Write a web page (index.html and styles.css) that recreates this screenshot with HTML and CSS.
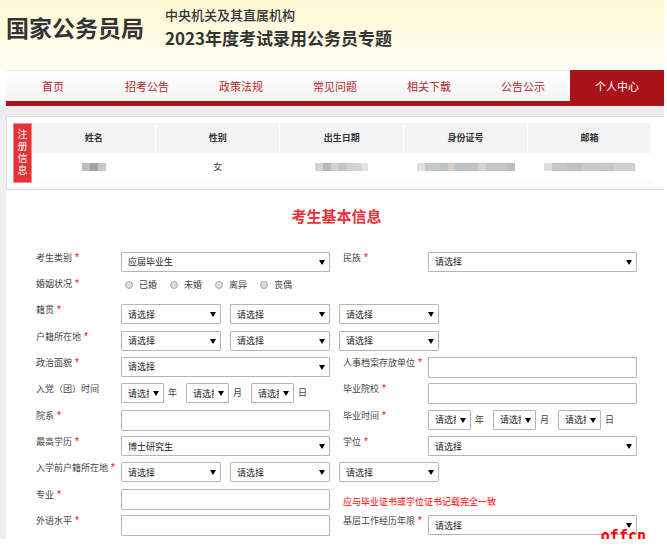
FILE: index.html
```
<!DOCTYPE html>
<html lang="zh-CN">
<head>
    <meta charset="UTF-8">
    <meta name="viewport" content="width=device-width, initial-scale=1.0">
    <title>2023年度考试录用公务员专题</title>
    <link rel="stylesheet" href="styles.css">
</head>
<body>
    <div class="page">
        <header>
            <div class="banner">
                <div class="logo">国家公务员局</div>
                <div class="banner-text">
                    <p>中央机关及其直属机构</p>
                    <h1>2023年度考试录用公务员专题</h1>
                </div>
            </div>
            <nav>
                <a href="#">首页</a>
                <a href="#">招考公告</a>
                <a href="#">政策法规</a>
                <a href="#">常见问题</a>
                <a href="#">相关下载</a>
                <a href="#">公告公示</a>
                <a href="#" class="active">个人中心</a>
            </nav>
        </header>
        <main>
            <section class="register-info">
                <div class="tab">注册信息</div>
                <table>
                    <thead>
                        <tr>
                            <th>姓名</th>
                            <th>性别</th>
                            <th>出生日期</th>
                            <th>身份证号</th>
                            <th>邮箱</th>
                        </tr>
                    </thead>
                    <tbody>
                        <tr>
                            <td><span class="mask mask-name"></span></td>
                            <td>女</td>
                            <td><span class="mask mask-birth"></span></td>
                            <td><span class="mask mask-id"></span></td>
                            <td><span class="mask mask-mail"></span></td>
                        </tr>
                    </tbody>
                </table>
            </section>
            <section class="basic-info">
                <h2>考生基本信息</h2>
                <form id="basicForm">
                    <div class="field">
                        <label for="category">考生类别 <i>*</i></label>
                        <div class="controls">
                            <span class="select"><select id="category"><option>应届毕业生</option></select></span>
                        </div>
                    </div>
                    <div class="field">
                        <label for="nation">民族 <i>*</i></label>
                        <div class="controls">
                            <span class="select"><select id="nation"><option>请选择</option></select></span>
                        </div>
                    </div>
                    <div class="field wide">
                        <span class="label" id="marriageLabel">婚姻状况 <i>*</i></span>
                        <div class="controls radios" role="radiogroup" aria-labelledby="marriageLabel">
                            <label><input type="radio" name="marriage">已婚</label>
                            <label><input type="radio" name="marriage">未婚</label>
                            <label><input type="radio" name="marriage">离异</label>
                            <label><input type="radio" name="marriage">丧偶</label>
                        </div>
                    </div>
                    <div class="field wide">
                        <label for="nativePlace">籍贯 <i>*</i></label>
                        <div class="controls region">
                            <span class="select"><select id="nativePlace"><option>请选择</option></select></span>
                            <span class="select"><select aria-label="籍贯市"><option>请选择</option></select></span>
                            <span class="select"><select aria-label="籍贯县"><option>请选择</option></select></span>
                        </div>
                    </div>
                    <div class="field wide">
                        <label for="household">户籍所在地 <i>*</i></label>
                        <div class="controls region">
                            <span class="select"><select id="household"><option>请选择</option></select></span>
                            <span class="select"><select aria-label="户籍市"><option>请选择</option></select></span>
                            <span class="select"><select aria-label="户籍县"><option>请选择</option></select></span>
                        </div>
                    </div>
                    <div class="field">
                        <label for="politics">政治面貌 <i>*</i></label>
                        <div class="controls">
                            <span class="select"><select id="politics"><option>请选择</option></select></span>
                        </div>
                    </div>
                    <div class="field">
                        <label for="archive">人事档案存放单位 <i>*</i></label>
                        <div class="controls"><input type="text" id="archive"></div>
                    </div>
                    <div class="field">
                        <label for="joinYear">入党（团）时间</label>
                        <div class="controls date">
                            <span class="select"><select id="joinYear"><option>请选择</option></select></span><span class="unit">年</span>
                            <span class="select"><select aria-label="入党月份"><option>请选择</option></select></span><span class="unit">月</span>
                            <span class="select"><select aria-label="入党日期"><option>请选择</option></select></span><span class="unit">日</span>
                        </div>
                    </div>
                    <div class="field">
                        <label for="school">毕业院校 <i>*</i></label>
                        <div class="controls"><input type="text" id="school"></div>
                    </div>
                    <div class="field">
                        <label for="department">院系 <i>*</i></label>
                        <div class="controls"><input type="text" id="department"></div>
                    </div>
                    <div class="field">
                        <label for="gradYear">毕业时间 <i>*</i></label>
                        <div class="controls date">
                            <span class="select"><select id="gradYear"><option>请选择</option></select></span><span class="unit">年</span>
                            <span class="select"><select aria-label="毕业月份"><option>请选择</option></select></span><span class="unit">月</span>
                            <span class="select"><select aria-label="毕业日期"><option>请选择</option></select></span><span class="unit">日</span>
                        </div>
                    </div>
                    <div class="field">
                        <label for="education">最高学历 <i>*</i></label>
                        <div class="controls">
                            <span class="select"><select id="education"><option>博士研究生</option></select></span>
                        </div>
                    </div>
                    <div class="field">
                        <label for="degree">学位 <i>*</i></label>
                        <div class="controls">
                            <span class="select"><select id="degree"><option>请选择</option></select></span>
                        </div>
                    </div>
                    <div class="field wide">
                        <label for="oldHousehold">入学前户籍所在地 <i>*</i></label>
                        <div class="controls region">
                            <span class="select"><select id="oldHousehold"><option>请选择</option></select></span>
                            <span class="select"><select aria-label="入学前户籍市"><option>请选择</option></select></span>
                            <span class="select"><select aria-label="入学前户籍县"><option>请选择</option></select></span>
                        </div>
                    </div>
                    <div class="field">
                        <label for="major">专业 <i>*</i></label>
                        <div class="controls"><input type="text" id="major"></div>
                    </div>
                    <p class="tip">应与毕业证书或学位证书记载完全一致</p>
                    <div class="field">
                        <label for="language">外语水平 <i>*</i></label>
                        <div class="controls"><input type="text" id="language"></div>
                    </div>
                    <div class="field">
                        <label for="workYears">基层工作经历年限 <i>*</i></label>
                        <div class="controls">
                            <span class="select"><select id="workYears"><option>请选择</option></select></span>
                        </div>
                    </div>
                </form>
            </section>
        </main>
        <div class="watermark">offcn</div>
    </div>
</body>
</html>
```

FILE: styles.css
```
* {
    box-sizing: border-box;
}
body {
    margin: 0;
    font-family: "Noto Sans CJK SC", "Noto Sans", sans-serif;
    font-size: 9px;
    line-height: 12px;
    color: #444;
    background-color: #fff;
}
.page {
    position: relative;
    margin-right: 3px;
    background-color: #eee;
}
h1, h2, p {
    margin: 0;
}

/* header */
header {
    padding-left: 6px;
    background: linear-gradient(#fff9d3, #fffefa 80px);
}
.banner {
    display: flex;
    align-items: flex-start;
    gap: 21px;
    height: 70px;
    padding-top: 6px;
    color: #333;
}
.logo {
    font-size: 23px;
    line-height: 42px;
    font-weight: bold;
}
.banner-text p {
    font-size: 13px;
    line-height: 18px;
    font-weight: 500;
}
.banner-text h1 {
    font-size: 17px;
    line-height: 28px;
    font-weight: bold;
}
nav {
    display: flex;
    border-top: 1px solid #eee;
    border-bottom: 5px solid #a9141b;
    background: linear-gradient(#fff, #f3f3f3);
}
nav a {
    flex: 1;
    font-size: 11px;
    line-height: 30px;
    text-align: center;
    text-decoration: none;
    color: #b0272d;
}
nav a.active {
    margin-top: -1px;
    padding-top: 1px;
    background-color: #a9141b;
    color: #fff;
}

/* registered info */
main {
    padding: 10px 0 0 6px;
}
.register-info {
    display: flex;
    padding: 6px 12px 6px 6px;
    border: 1px solid #ddd;
    border-right: none;
    background-color: #fff;
}
.tab {
    flex: 0 0 19px;
    padding: 4px 3px;
    border: 1px solid #f08a8d;
    background-color: #e53238;
    color: #fff;
    font-size: 10px;
    text-align: center;
}
.register-info table {
    width: 100%;
    table-layout: fixed;
    border-collapse: collapse;
}
.register-info th {
    height: 30px;
    padding: 0;
    border-right: 1px solid #fff;
    background-color: #f4f4f4;
    color: #333;
}
.register-info td {
    height: 29px;
    padding: 0;
    border-bottom: 1px solid #f4f4f4;
    text-align: center;
}
.mask {
    display: block;
    height: 8px;
    margin: 0 auto;
}
.mask-name {
    width: 24px;
    background: linear-gradient(90deg, #c0bab8 0 8px, #a3a3a3 8px 16px, #c3c7ca 16px);
}
.mask-birth {
    width: 53px;
    background: linear-gradient(90deg, #d2d2d2 0 8px, #b6bbba 8px 16px, #d0d2d2 16px 24px, #c2c4c6 24px 32px, #d3d2d2 32px 40px, #d8d3d6 40px 47px, #e2e2e2 47px);
}
.mask-id {
    width: 98px;
    background: linear-gradient(90deg, #dfe1e0 0 8px, #c6c8c9 8px 23px, #b9c1c9 23px 31px, #d5cec4 31px 38px, #bcc1c4 38px 46px, #c2c1c0 46px 61px, #d4d3d3 61px 69px, #c5c4c9 69px 90px, #b9bec5 90px);
}
.mask-mail {
    width: 91px;
    background: linear-gradient(90deg, #dcdddc 0 8px, #c8c7c4 8px 23px, #bec3c2 23px 38px, #c9c9cb 38px 54px, #cbc7c5 54px 70px, #d0cfd0 70px);
}

/* basic info */
.basic-info {
    padding: 15px 27px 2px 30px;
    background-color: #fff;
}
.basic-info h2 {
    margin-bottom: 25px;
    font-size: 15px;
    line-height: 22px;
    text-align: center;
    color: #e53238;
}
form {
    display: grid;
    grid-template-columns: 1fr 1fr;
    grid-auto-rows: 1fr;
    gap: 5px 13px;
    min-height: 285px;
}
.field {
    display: flex;
}
.wide {
    grid-column: span 2;
}
.field > label, .label {
    width: 85px;
    flex-shrink: 0;
    white-space: nowrap;
}
i {
    margin-left: 1px;
    font-family: "Liberation Sans", sans-serif;
    font-size: 10px;
    font-style: normal;
    line-height: 10px;
    color: #f00;
}
.controls {
    display: flex;
    align-items: flex-start;
    flex: 1;
}
.select {
    position: relative;
    display: flex;
    flex: 1;
}
.select::after {
    content: "";
    position: absolute;
    top: 8px;
    right: 5px;
    border: 3px solid transparent;
    border-top: 5px solid #000;
    border-bottom: none;
    pointer-events: none;
}
select, input[type="text"] {
    width: 100%;
    border: 1px solid #b5b5b5;
    border-radius: 1px;
    background-color: #fff;
    font-family: inherit;
    font-size: 9px;
    color: #222;
}
select {
    height: 20px;
    padding: 0 14px 0 6px;
    appearance: none;
    text-overflow: clip;
}
input[type="text"] {
    height: 21px;
    padding: 0 6px;
}
.region {
    gap: 9px;
}
.region .select {
    flex: 0 0 100px;
}
.date .select {
    flex: 0 0 43px;
}
.unit {
    width: 22px;
    padding-left: 4px;
    line-height: 20px;
}
.radios {
    gap: 13px;
    padding-left: 4px;
}
.radios label {
    display: flex;
    align-items: center;
    gap: 6px;
    line-height: 14px;
}
input[type="radio"] {
    appearance: none;
    width: 8px;
    height: 8px;
    margin: 0;
    border: 1px solid #aaa;
    border-radius: 50%;
    background-color: #ddd;
}
input[type="radio"]:checked {
    background-color: #555;
}
.tip {
    padding-top: 7px;
    color: #f00;
}
.watermark {
    position: absolute;
    right: 18px;
    bottom: -6px;
    font-family: "DejaVu Sans Mono", monospace;
    font-size: 15px;
    line-height: 18px;
    font-weight: bold;
    color: #f00;
}
```
